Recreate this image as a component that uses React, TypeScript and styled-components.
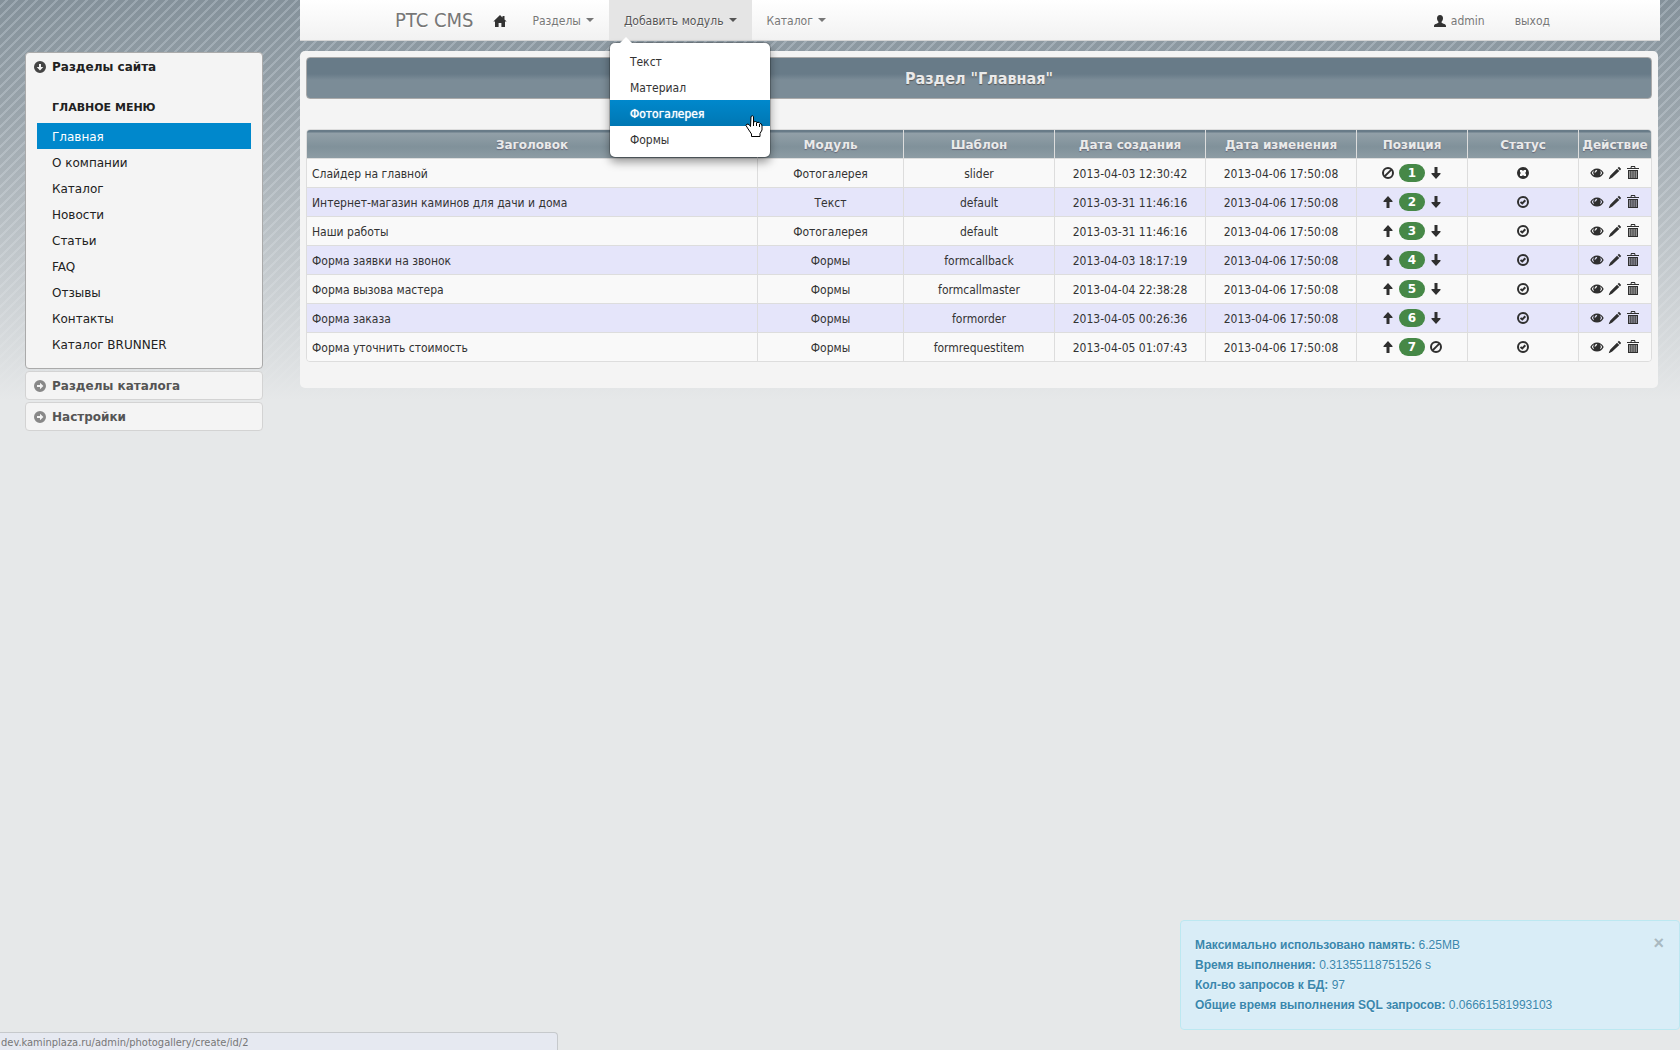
import React, { useState } from 'react';
import styled, { createGlobalStyle, css } from 'styled-components';

const ui = '"DejaVu Sans Condensed", Tahoma, "DejaVu Sans", sans-serif';
const wide = '"DejaVu Sans", Verdana, sans-serif';

const GlobalStyle = createGlobalStyle`
  * { box-sizing: border-box; }
  body {
    margin: 0;
    min-height: 100vh;
    color: #333;
    font: 12px/20px ${ui};
    background-color: #e6e8e9;
    background-image:
      linear-gradient(to bottom, rgba(230, 232, 233, 0), rgba(230, 232, 233, 0.22) 110px, rgba(230, 232, 233, 0.58) 240px, #e6e8e9 400px),
      linear-gradient(135deg, #84919a 0 25%, #9ba7b0 30% 40%, #84919a 45% 75%, #9ba7b0 80% 90%, #84919a 95%);
    background-size: 100% 100%, 10px 10px;
  }
  a { color: inherit; text-decoration: none; }
  ul { list-style: none; margin: 0; padding: 0; }
`;

const Page = styled.div`
  display: grid;
  grid-template-columns: 300px minmax(0, 1fr);
`;

const Sidebar = styled.aside`
  display: flex;
  flex-direction: column;
  gap: 2px;
  padding: 52px 37px 0 25px;
`;

const Panel = styled.section<{ $open?: boolean }>`
  background: #f4f4f4;
  border: 1px solid ${p => (p.$open ? '#aaa' : '#d3d3d3')};
  border-radius: 4px;
  padding-bottom: ${p => (p.$open ? '11px' : '0')};
`;

const PanelHeading = styled.button<{ $open?: boolean }>`
  display: flex;
  align-items: center;
  gap: 5px;
  width: 100%;
  height: 27px;
  padding: 0 7px;
  border: 0;
  background: none;
  text-align: left;
  color: ${p => (p.$open ? '#212121' : '#555')};
  font: bold 12px/20px ${wide};
  svg { color: ${p => (p.$open ? '#444' : '#888')}; }
`;

const MenuCaption = styled.h2`
  margin: 16px 0 3px 26px;
  font: bold 11px/24px ${wide};
  color: #212121;
  text-transform: uppercase;
`;

const MenuLink = styled.a<{ $active?: boolean }>`
  display: block;
  margin: 0 11px;
  padding: 4px 15px 2px;
  font: 12px/20px ${wide};
  color: #212121;
  ${p => p.$active && css`background: #08c; color: #fff;`}
`;

const Content = styled.div`
  min-width: 0;
  padding-right: 20px;
`;

const Navbar = styled.nav`
  display: flex;
  justify-content: center;
  height: 41px;
  background: linear-gradient(to bottom, #fff, #f2f2f2);
  border-bottom: 1px solid #d4d4d4;
`;

const NavInner = styled.div`
  display: flex;
  align-items: stretch;
  width: 100%;
  max-width: 1170px;
`;

const Brand = styled.a`
  margin-right: 5px;
  color: #777;
  font: 20px/40px ${ui};
  text-shadow: 0 1px 0 #fff;
`;

const NavList = styled.ul<{ $end?: boolean }>`
  display: flex;
  margin-left: ${p => (p.$end ? 'auto' : '0')};
`;

const NavItem = styled.li`
  position: relative;
  display: flex;
`;

const NavLink = styled.a<{ $active?: boolean; $icon?: boolean }>`
  display: flex;
  align-items: center;
  gap: 4px;
  padding: ${p => (p.$icon ? '2px 10px 0 15px' : '2px 15px 0')};
  color: ${p => (p.$active ? '#555' : '#777')};
  background: ${p => (p.$active ? '#e5e5e5' : 'none')};
  text-shadow: 0 1px 0 #fff;
  white-space: nowrap;
  svg { color: #333; }
`;

const Caret = styled.span`
  margin: 0 0 2px 1px;
  border: 4px solid transparent;
  border-top-color: currentColor;
  border-bottom: 0;
`;

const Dropdown = styled.ul`
  position: absolute;
  z-index: 2;
  top: 43px;
  left: 1px;
  width: 160px;
  padding: 5px 0;
  background: #fff;
  border-radius: 5px;
  box-shadow: 0 0 0 1px rgba(0, 0, 0, 0.2), 0 5px 10px rgba(0, 0, 0, 0.4);
  &::before {
    content: '';
    position: absolute;
    top: -6px;
    left: 10px;
    border: 6px solid transparent;
    border-top: 0;
    border-bottom-color: #fff;
  }
`;

const DropdownLink = styled.a<{ $active?: boolean }>`
  display: block;
  padding: 4px 20px 2px;
  color: #333;
  ${p => p.$active && css`
    color: #fff;
    text-shadow: 0 0 1px #fff;
    background: linear-gradient(to bottom, #08c, #0077b3);
  `}
`;

const Pointer = styled.svg`
  position: absolute;
  top: 72px;
  left: 135px;
  z-index: 3;
`;

const Main = styled.main`
  margin: 10px 2px 0 0;
  padding: 6px 6px 26px;
  background: #f4f4f4;
  border-radius: 5px;
`;

const Title = styled.h1`
  margin: 0 0 30px;
  padding: 11px 10px 9px;
  border: 1px solid #aaa;
  border-radius: 4px;
  background: linear-gradient(to bottom, #687b88 0 40%, #7b8c97 55%);
  color: #eaeaea;
  text-align: center;
  text-shadow: 0 1px 1px #555;
  font: bold 16px/20px ${ui};
`;

const Grid = styled.table`
  width: 100%;
  table-layout: fixed;
  border: 1px solid #ddd;
  border-radius: 4px;
  border-collapse: separate;
  border-spacing: 0;
  overflow: hidden;
`;

const Col = styled.col<{ $w?: number }>`
  width: ${p => (p.$w ? `${p.$w}px` : 'auto')};
`;

const Th = styled.th`
  height: 28px;
  padding: 5px 0 3px;
  color: #eaeaea;
  font: bold 12px/20px ${wide};
  text-shadow: 0 1px 1px #667;
  background: linear-gradient(to bottom, #687b88 0 2px, #92a0a8 3px, #80919a 60%, #8d9ca4);
  & + & { border-left: 1px solid #ddd; }
`;

const Td = styled.td<{ $left?: boolean; $icons?: boolean }>`
  padding: ${p => (p.$icons ? '4px 5px' : '5px 5px 3px')};
  border-top: 1px solid #ddd;
  text-align: ${p => (p.$left ? 'left' : 'center')};
  white-space: nowrap;
  & + & { border-left: 1px solid #ddd; }
`;

const Row = styled.tr`
  background: #f9f9f9;
  &:nth-child(even) { background: #e5e5fa; }
`;

const Actions = styled.div`
  display: flex;
  align-items: center;
  justify-content: center;
  gap: 4px;
  height: 20px;
`;

const IconButton = styled.button`
  display: flex;
  padding: 0;
  border: 0;
  background: none;
  color: #2f2f2f;
`;

const Badge = styled.span`
  width: 26px;
  border-radius: 9px;
  background: #468847;
  color: #fff;
  font: bold 12px/18px ${wide};
`;

const Alert = styled.section`
  position: fixed;
  right: 0;
  bottom: 20px;
  width: 500px;
  padding: 14px;
  min-height: 110px;
  border: 1px solid #bce8f1;
  border-radius: 4px;
  background: #d9edf7;
  color: #3a87ad;
  font: 12px/20px "Liberation Sans", Arial, sans-serif;
  text-shadow: 0 1px 0 rgba(255, 255, 255, 0.5);
  p { margin: 0; }
`;

const Close = styled.button`
  position: absolute;
  top: 12px;
  right: 15px;
  padding: 0;
  border: 0;
  background: none;
  color: #a9b9c1;
  font: bold 18px/20px "Liberation Sans", Arial, sans-serif;
`;

const StatusBar = styled.footer`
  position: fixed;
  left: 0;
  bottom: 0;
  width: 558px;
  height: 18px;
  padding-left: 1px;
  overflow: hidden;
  border: solid #c6c9cc;
  border-width: 1px 1px 0 0;
  border-top-right-radius: 4px;
  background: #e6e9f1;
  color: #777;
  font: 11px/19px ${ui};
`;

type IconName = 'home' | 'user' | 'ban' | 'up' | 'down' | 'off' | 'ok' | 'eye' | 'pencil' | 'trash' | 'circleDown' | 'circleRight';

const glyphs: Record<IconName, React.ReactNode> = {
  home: <path d="M7 1 0.3 7.6H2V13h3.600V9h2.800v4H12V7.600h1.700L11.500 5.400V2h-2v1.500z" />,
  user: <path d="M7 1C5 1 4 2.300 4 4.200c0 1.500.6 2.800 1.400 3.500v1.100C4 9.800 1 10 1 12v1h12v-1c0-2-3-2.200-4.400-3.200V7.700C9.400 7 10 5.700 10 4.200 10 2.300 9 1 7 1z" />,
  ban: <g fill="none" stroke="currentColor" strokeWidth="2"><circle cx="7" cy="7" r="5" /><path d="m3.600 10.400 6.800-6.800" /></g>,
  up: <path d="M7 1 2.500 6v1H5.500v6h3V7h3V6z" />,
  down: <path d="M7 13 2.500 8V7H5.500V1h3v6h3v1z" />,
  off: <path fillRule="evenodd" d="M7 1a6 6 0 1 0 0 12A6 6 0 0 0 7 1zM4 4h2l1 1 1-1h2v2L9 7l1 1v2H8L7 9l-1 1H4V8l1-1-1-1z" />,
  ok: <g fill="none" stroke="currentColor" strokeWidth="2"><circle cx="7" cy="7" r="5" /><path d="m4.500 7 1.800 1.500L9.300 5.300" /></g>,
  eye: <path fillRule="evenodd" d="M7 2.500C4 2.500 1.800 4 .3 7 1.800 10 4 11.500 7 11.500S12.200 10 13.700 7C12.200 4 10 2.500 7 2.500zM1.800 7C2.500 5.600 3.300 4.800 4.200 4.300a4 4 0 0 0 0 5C3.200 8.800 2.500 8.200 1.800 7zm10.400 0c-.7 1.200-1.400 1.800-2.400 2.300a4 4 0 0 0 0-5c.9.5 1.700 1.300 2.400 2.700zM6.800 4a1 1 0 0 1 0 1.500c-.8 0-1.300.5-1.300 1.300H4.600C4.600 5.200 5.400 4 6.800 4z" />,
  pencil: <path d="m11 .8 2.200 2.200-1.300 1.400-2.300-2.300zM9 2.700 11.300 5 4.300 11.500 2 12.800l-1.200.4.300-1.300L2.300 9.500z" />,
  trash: <path fillRule="evenodd" d="M5 0h4l.5 2H13v1H1V2h3.500zm.6 1v1h2.800V1zM2 4h10v9H2zm1.500 1v7h.7V5zm2.100 0v7h.7V5zm2.100 0v7h.7V5zM9.800 5v7h.7V5z" />,
  circleDown: <path fillRule="evenodd" d="M7 1a6 6 0 1 0 0 12A6 6 0 0 0 7 1zM6 4h2v3h2.300L7 10.400 3.700 7H6z" />,
  circleRight: <path fillRule="evenodd" d="M7 1a6 6 0 1 0 0 12A6 6 0 0 0 7 1zM4 6h3V3.700L10.400 7 7 10.300V8H4z" />,
};

function Icon({ name }: { name: IconName }) {
  return <svg width="14" height="14" viewBox="0 0 14 14" fill="currentColor" aria-hidden="true">{glyphs[name]}</svg>;
}

const menu = ['Главная', 'О компании', 'Каталог', 'Новости', 'Статьи', 'FAQ', 'Отзывы', 'Контакты', 'Каталог BRUNNER'];
const modules = ['Текст', 'Материал', 'Фотогалерея', 'Формы'];
const columns = ['Заголовок', 'Модуль', 'Шаблон', 'Дата создания', 'Дата изменения', 'Позиция', 'Статус', 'Действие'];
const widths = [0, 146, 151, 151, 151, 111, 111, 73];
const rows = [
  ['Слайдер на главной', 'Фотогалерея', 'slider', '2013-04-03 12:30:42'],
  ['Интернет-магазин каминов для дачи и дома', 'Текст', 'default', '2013-03-31 11:46:16'],
  ['Наши работы', 'Фотогалерея', 'default', '2013-03-31 11:46:16'],
  ['Форма заявки на звонок', 'Формы', 'formcallback', '2013-04-03 18:17:19'],
  ['Форма вызова мастера', 'Формы', 'formcallmaster', '2013-04-04 22:38:28'],
  ['Форма заказа', 'Формы', 'formorder', '2013-04-05 00:26:36'],
  ['Форма уточнить стоимость', 'Формы', 'formrequestitem', '2013-04-05 01:07:43'],
];
const stats = [
  ['Максимально использовано память:', '6.25MB'],
  ['Время выполнения:', '0.31355118751526 s'],
  ['Кол-во запросов к БД:', '97'],
  ['Общие время выполнения SQL запросов:', '0.06661581993103'],
];

export default function App() {
  const [alertShown, setAlertShown] = useState(true);
  return (
    <>
      <GlobalStyle />
      <Page>
        <Sidebar>
          <Panel $open>
            <PanelHeading $open aria-expanded="true"><Icon name="circleDown" />Разделы сайта</PanelHeading>
            <MenuCaption>Главное меню</MenuCaption>
            <ul>
              {menu.map((m, i) => <li key={m}><MenuLink href="#" $active={i === 0}>{m}</MenuLink></li>)}
            </ul>
          </Panel>
          <Panel><PanelHeading aria-expanded="false"><Icon name="circleRight" />Разделы каталога</PanelHeading></Panel>
          <Panel><PanelHeading aria-expanded="false"><Icon name="circleRight" />Настройки</PanelHeading></Panel>
        </Sidebar>
        <Content>
          <Navbar>
            <NavInner>
              <Brand href="#">PTC CMS</Brand>
              <NavList>
                <NavItem><NavLink href="#" $icon aria-label="Home"><Icon name="home" /></NavLink></NavItem>
                <NavItem><NavLink href="#">Разделы<Caret /></NavLink></NavItem>
                <NavItem>
                  <NavLink href="#" $active>Добавить модуль<Caret /></NavLink>
                  <Dropdown>
                    {modules.map(m => <li key={m}><DropdownLink href="#" $active={m === 'Фотогалерея'}>{m}</DropdownLink></li>)}
                    <Pointer width="18" height="23" viewBox="0 0 18 23" aria-hidden="true">
                      <path d="M6 1.500Q7.500 0 8.500 1.500V7l2-.5 1.500 1 2-.2 1 1.200 1.500.5.500 2v4l-2 3.500v3H6.500v-2.500L2.500 13 1 10.500l1-1.500 2 .5 1.500 2z" fill="#fff" stroke="#000" strokeLinejoin="round" />
                      <path d="M8.500 7v4M11.500 8v3M14.500 9v3" stroke="#000" />
                    </Pointer>
                  </Dropdown>
                </NavItem>
                <NavItem><NavLink href="#">Каталог<Caret /></NavLink></NavItem>
              </NavList>
              <NavList $end>
                <NavItem><NavLink href="#"><Icon name="user" />admin</NavLink></NavItem>
                <NavItem><NavLink href="#">выход</NavLink></NavItem>
              </NavList>
            </NavInner>
          </Navbar>
          <Main>
            <Title>Раздел "Главная"</Title>
            <Grid>
              <colgroup>{widths.map((w, i) => <Col key={i} $w={w} />)}</colgroup>
              <thead><tr>{columns.map(c => <Th key={c}>{c}</Th>)}</tr></thead>
              <tbody>
                {rows.map((r, i) => (
                  <Row key={r[0]}>
                    <Td $left>{r[0]}</Td>
                    <Td>{r[1]}</Td>
                    <Td>{r[2]}</Td>
                    <Td>{r[3]}</Td>
                    <Td>2013-04-06 17:50:08</Td>
                    <Td $icons>
                      <Actions>
                        <IconButton aria-label="Выше"><Icon name={i === 0 ? 'ban' : 'up'} /></IconButton>
                        <Badge>{i + 1}</Badge>
                        <IconButton aria-label="Ниже"><Icon name={i === rows.length - 1 ? 'ban' : 'down'} /></IconButton>
                      </Actions>
                    </Td>
                    <Td $icons>
                      <Actions><IconButton aria-label="Статус"><Icon name={i === 0 ? 'off' : 'ok'} /></IconButton></Actions>
                    </Td>
                    <Td $icons>
                      <Actions>
                        <IconButton aria-label="Просмотр"><Icon name="eye" /></IconButton>
                        <IconButton aria-label="Редактировать"><Icon name="pencil" /></IconButton>
                        <IconButton aria-label="Удалить"><Icon name="trash" /></IconButton>
                      </Actions>
                    </Td>
                  </Row>
                ))}
              </tbody>
            </Grid>
          </Main>
        </Content>
      </Page>
      {alertShown && (
        <Alert>
          <Close aria-label="Закрыть" onClick={() => setAlertShown(false)}>×</Close>
          {stats.map(([k, v]) => <p key={k}><strong>{k}</strong> {v}</p>)}
        </Alert>
      )}
      <StatusBar>dev.kaminplaza.ru/admin/photogallery/create/id/2</StatusBar>
    </>
  );
}
